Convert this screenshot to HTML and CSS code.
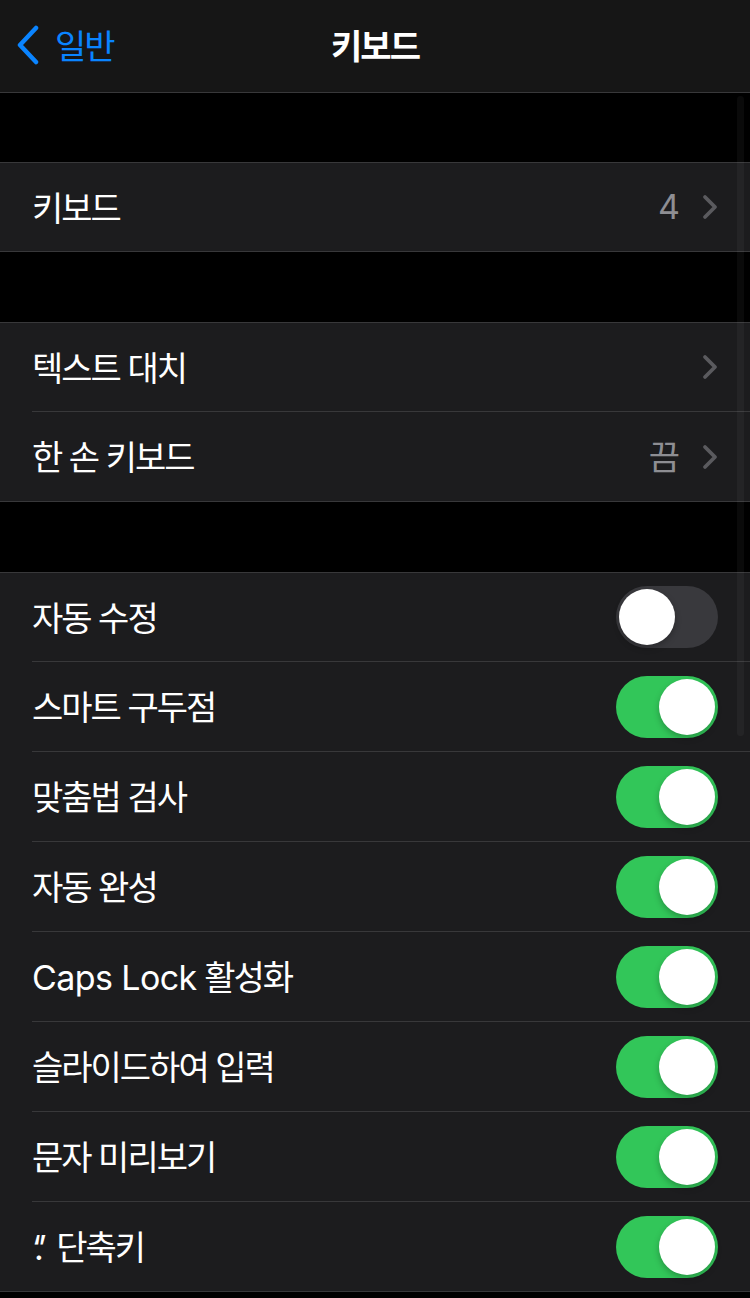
FILE: index.html
```html
<!DOCTYPE html>
<html lang="ko">
<head>
    <meta charset="UTF-8">
    <meta name="viewport" content="width=device-width, initial-scale=1.0">
    <title>키보드</title>
    <link rel="stylesheet" href="styles.css">
</head>
<body>

<div class="navbar">
    <a class="back" href="#">
        <svg class="back-icon" width="24" height="40" viewBox="0 0 24 40">
            <path d="M20 3 L4 20 L20 37" fill="none" stroke="#0a84ff" stroke-width="4.5" stroke-linecap="round" stroke-linejoin="round"/>
        </svg>
        <span>일반</span>
    </a>
    <div class="nav-title">키보드</div>
</div>

<div class="content">
    <div class="group">
        <div class="row">
            <div class="row-inner">
                <span class="label">키보드</span>
                <span class="value">4</span>
                <svg class="chevron" width="16" height="26" viewBox="0 0 16 26"><path d="M3 3 L13 13 L3 23" fill="none" stroke="#5a5a5e" stroke-width="3.8" stroke-linecap="round" stroke-linejoin="round"/></svg>
            </div>
        </div>
    </div>

    <div class="group">
        <div class="row">
            <div class="row-inner">
                <span class="label">텍스트 대치</span>
                <svg class="chevron" width="16" height="26" viewBox="0 0 16 26"><path d="M3 3 L13 13 L3 23" fill="none" stroke="#5a5a5e" stroke-width="3.8" stroke-linecap="round" stroke-linejoin="round"/></svg>
            </div>
        </div>
        <div class="row">
            <div class="row-inner">
                <span class="label">한 손 키보드</span>
                <span class="value">끔</span>
                <svg class="chevron" width="16" height="26" viewBox="0 0 16 26"><path d="M3 3 L13 13 L3 23" fill="none" stroke="#5a5a5e" stroke-width="3.8" stroke-linecap="round" stroke-linejoin="round"/></svg>
            </div>
        </div>
    </div>

    <div class="group">
        <div class="row">
            <div class="row-inner">
                <span class="label">자동 수정</span>
                <span class="toggle"><span class="knob"></span></span>
            </div>
        </div>
        <div class="row">
            <div class="row-inner">
                <span class="label">스마트 구두점</span>
                <span class="toggle on"><span class="knob"></span></span>
            </div>
        </div>
        <div class="row">
            <div class="row-inner">
                <span class="label">맞춤법 검사</span>
                <span class="toggle on"><span class="knob"></span></span>
            </div>
        </div>
        <div class="row">
            <div class="row-inner">
                <span class="label">자동 완성</span>
                <span class="toggle on"><span class="knob"></span></span>
            </div>
        </div>
        <div class="row">
            <div class="row-inner">
                <span class="label"><span class="latin">Caps Lock</span> 활성화</span>
                <span class="toggle on"><span class="knob"></span></span>
            </div>
        </div>
        <div class="row">
            <div class="row-inner">
                <span class="label">슬라이드하여 입력</span>
                <span class="toggle on"><span class="knob"></span></span>
            </div>
        </div>
        <div class="row">
            <div class="row-inner">
                <span class="label">문자 미리보기</span>
                <span class="toggle on"><span class="knob"></span></span>
            </div>
        </div>
        <div class="row">
            <div class="row-inner">
                <span class="label"><span class="quote">‘.’</span> 단축키</span>
                <span class="toggle on"><span class="knob"></span></span>
            </div>
        </div>
    </div>

    <div class="scrollbar"></div>
</div>

</body>
</html>
```

FILE: styles.css
```css
body {
    margin: 0;
    padding: 0;
    background-color: #000;
    color: #fff;
    font-family: Inter, "Noto Sans CJK KR", sans-serif;
    font-size: 34px;
}
.navbar {
    height: 92px;
    background-color: #161616;
    border-bottom: 1px solid #38383a;
    display: flex;
    align-items: center;
    justify-content: center;
    position: relative;
}
.back {
    position: absolute;
    left: 16px;
    top: 0;
    height: 92px;
    display: flex;
    align-items: center;
    gap: 15px;
    color: #0a84ff;
    text-decoration: none;
    font-size: 34px;
    letter-spacing: -2px;
}
.back-icon {
    margin-top: -2px;
}
.back span {
    margin-top: -4px;
}
.nav-title {
    font-weight: 600;
    font-size: 34px;
    letter-spacing: -2px;
    margin-top: -4px;
}
.content {
    position: relative;
    padding-top: 69px;
}
.group {
    background-color: #1c1c1e;
    border-top: 1px solid #38383a;
    border-bottom: 1px solid #38383a;
    margin-bottom: 70px;
}
.row {
    padding-left: 32px;
}
.row-inner {
    height: 89px;
    display: flex;
    align-items: center;
    padding-right: 32px;
    border-bottom: 1px solid #38383a;
}
.row:first-child .row-inner {
    height: 88px;
}
.row:last-child .row-inner {
    border-bottom: none;
}
.label {
    flex: 1;
    margin-top: -2px;
    letter-spacing: -2px;
}
.latin {
    letter-spacing: -0.6px;
}
.quote {
    letter-spacing: -4px;
    margin-right: 6px;
}
.value {
    color: #8e8e93;
    margin-right: 22px;
    margin-top: -2px;
}
.chevron {
    display: block;
}
.toggle {
    width: 102px;
    height: 62px;
    border-radius: 31px;
    background-color: #39393d;
    position: relative;
}
.toggle .knob {
    position: absolute;
    top: 3px;
    left: 3px;
    width: 56px;
    height: 56px;
    border-radius: 50%;
    background-color: #fff;
    box-shadow: 0 3px 6px rgba(0, 0, 0, 0.25);
}
.toggle.on {
    background-color: #32c659;
}
.toggle.on .knob {
    left: 43px;
}
.scrollbar {
    position: absolute;
    left: 737px;
    top: 3px;
    width: 7px;
    height: 640px;
    border-radius: 4px;
    background-color: rgba(255, 255, 255, 0.04);
}
```
